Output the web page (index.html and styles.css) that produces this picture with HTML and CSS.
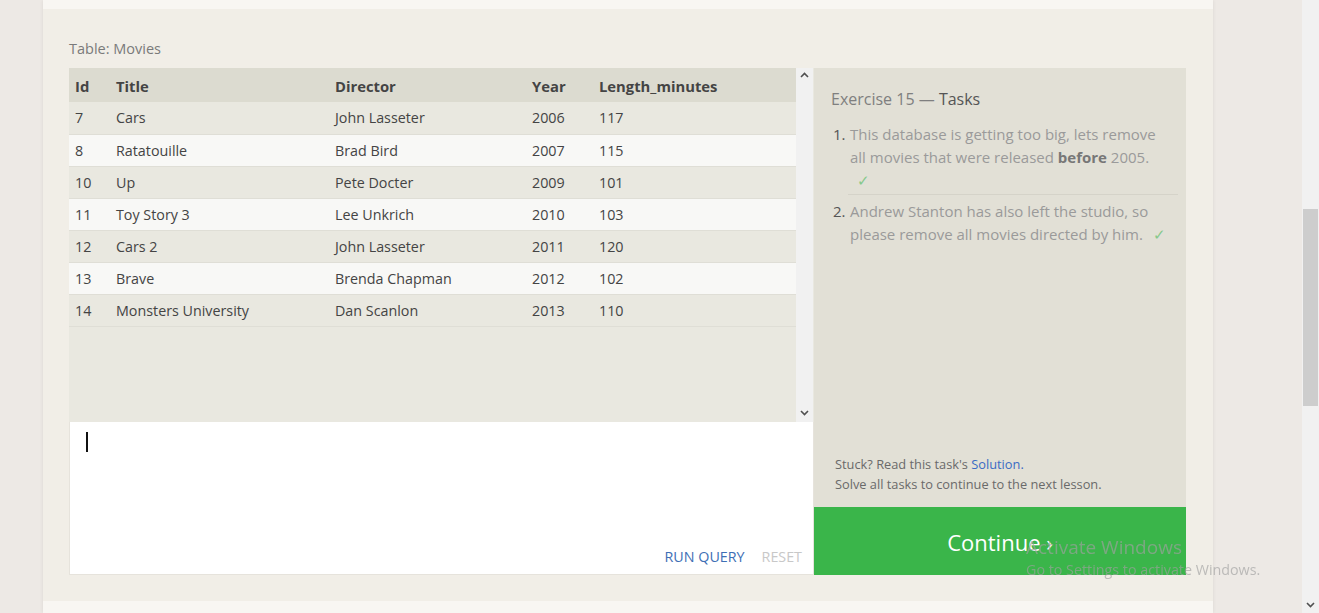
FILE: index.html
```html
<!DOCTYPE html>
<html>
<head>
<meta charset="utf-8">
<link rel="stylesheet" href="styles.css">
</head>
<body>
<div class="viewport">
  <div class="gutter"></div>
  <div class="column">
    <div class="prev-card"></div>
    <div class="card">
      <div class="table-label">Table: Movies</div>
      <div class="exercise">
        <div class="left">
          <div class="table-pane">
            <div class="table-scroll">
              <table class="movies">
                <thead>
                  <tr><th class="c-id">Id</th><th class="c-title">Title</th><th class="c-dir">Director</th><th class="c-year">Year</th><th>Length_minutes</th></tr>
                </thead>
                <tbody>
                  <tr><td>7</td><td>Cars</td><td>John Lasseter</td><td>2006</td><td>117</td></tr>
                  <tr><td>8</td><td>Ratatouille</td><td>Brad Bird</td><td>2007</td><td>115</td></tr>
                  <tr><td>10</td><td>Up</td><td>Pete Docter</td><td>2009</td><td>101</td></tr>
                  <tr><td>11</td><td>Toy Story 3</td><td>Lee Unkrich</td><td>2010</td><td>103</td></tr>
                  <tr><td>12</td><td>Cars 2</td><td>John Lasseter</td><td>2011</td><td>120</td></tr>
                  <tr><td>13</td><td>Brave</td><td>Brenda Chapman</td><td>2012</td><td>102</td></tr>
                  <tr><td>14</td><td>Monsters University</td><td>Dan Scanlon</td><td>2013</td><td>110</td></tr>
                </tbody>
              </table>
            </div>
            <div class="inner-scrollbar">
              <svg class="arrow" width="9" height="6" viewBox="0 0 9 6"><path d="M1 5 L4.5 1.5 L8 5" fill="none" stroke="#505050" stroke-width="1.6"/></svg>
              <svg class="arrow" width="9" height="6" viewBox="0 0 9 6"><path d="M1 1 L4.5 4.5 L8 1" fill="none" stroke="#505050" stroke-width="1.6"/></svg>
            </div>
          </div>
          <div class="editor">
            <div class="caret"></div>
            <div class="editor-actions">
              <span class="run">RUN QUERY</span>
              <span class="reset">RESET</span>
            </div>
          </div>
        </div>
        <div class="right">
          <div class="tasks">
            <div class="tasks-title"><span class="muted">Exercise 15 —</span> Tasks</div>
            <ol class="task-list">
              <li class="task"><span class="num">1.</span><span class="task-text">This database is getting too big, lets remove all movies that were released <b>before</b> 2005.<br><span class="check first">✓</span></span></li>
              <li class="task"><span class="num">2.</span><span class="task-text">Andrew Stanton has also left the studio, so please remove all movies directed by him. <span class="check">✓</span></span></li>
            </ol>
            <div class="stuck">
              <div>Stuck? Read this task's <span class="link">Solution.</span></div>
              <div>Solve all tasks to continue to the next lesson.</div>
            </div>
          </div>
          <div class="continue">Continue ›</div>
        </div>
      </div>
    </div>
    <div class="next-card"></div>
  </div>
  <div class="gutter-right"></div>
  <div class="page-scrollbar">
    <div class="thumb"></div>
    <svg class="page-arrow" width="9" height="6" viewBox="0 0 9 6"><path d="M1 1 L4.5 4.5 L8 1" fill="none" stroke="#505050" stroke-width="1.6"/></svg>
  </div>
</div>
<div class="watermark">
  <div class="wm-title">Activate Windows</div>
  <div class="wm-sub">Go to Settings to activate Windows.</div>
</div>
</body>
</html>
```
FILE: styles.css
```css
html, body {
  margin: 0;
  padding: 0;
  height: 613px;
  overflow: hidden;
}
body {
  background: #ede9e5;
  font-family: "Open Sans", "Noto Sans", sans-serif;
}
.viewport {
  display: flex;
  height: 613px;
}
.gutter {
  width: 43px;
  flex: none;
}
.column {
  width: 1170px;
  flex: none;
  display: flex;
  flex-direction: column;
  box-shadow: 0 0 4px rgba(0, 0, 0, 0.08);
}
.prev-card {
  height: 9px;
  background: #f8f6f2;
  flex: none;
}
.card {
  background: #f1eee7;
  height: 592px;
  flex: none;
  padding: 30px 0 0 26px;
  box-sizing: border-box;
}
.next-card {
  flex: 1;
  background: #f8f6f2;
}
.gutter-right {
  flex: 1;
}
.table-label {
  font-size: 14.5px;
  color: #7a7a7a;
  line-height: 20px;
  height: 20px;
  margin-bottom: 9px;
}
.exercise {
  display: flex;
  height: 507px;
}
.left {
  width: 745px;
  display: flex;
  flex-direction: column;
}
.table-pane {
  height: 354px;
  display: flex;
  background: #e9e8e0;
}
.table-scroll {
  width: 727px;
  overflow: hidden;
}
.movies {
  width: 100%;
  border-collapse: collapse;
  font-size: 14.3px;
  color: #444;
}
.movies th {
  background: #dcdbd0;
  text-align: left;
  font-weight: 700;
  font-size: 14.8px;
  height: 34px;
  box-sizing: border-box;
  padding: 1px 0 0 6px;
  color: #444;
}
.movies td {
  height: 32px;
  padding: 0 0 0 6px;
  box-sizing: border-box;
  border-bottom: 1px solid #dfded6;
}
.movies tbody tr:nth-child(even) td {
  background: #f8f8f6;
}
.movies .c-id { width: 41px; }
.movies .c-title { width: 219px; }
.movies .c-dir { width: 197px; }
.movies .c-year { width: 67px; }
.inner-scrollbar {
  width: 17px;
  background: #f1f1f1;
  display: flex;
  flex-direction: column;
  justify-content: space-between;
  align-items: center;
  padding: 4px 0 6px;
  box-sizing: border-box;
}
.arrow { display: block; }
.editor {
  flex: 1;
  background: #fff;
  border: 1px solid #e6e3dc;
  border-top: none;
  display: flex;
  flex-direction: column;
  justify-content: space-between;
  padding: 10px 11px 8px 16px;
}
.caret {
  width: 2px;
  height: 20px;
  background: #111;
}
.editor-actions {
  display: flex;
  justify-content: flex-end;
  gap: 17px;
  font-size: 14.3px;
  line-height: 18px;
}
.run { color: #3e6fb5; }
.reset { color: #c8c8c8; }
.right {
  width: 372px;
  display: flex;
  flex-direction: column;
}
.tasks {
  flex: 1;
  background: #e2e0d6;
  padding: 20px 8px 13px 17px;
  display: flex;
  flex-direction: column;
}
.tasks-title {
  font-size: 16px;
  color: #555;
  line-height: 22px;
  margin-bottom: 13px;
}
.tasks-title .muted { color: #7f7f7f; }
.task-list {
  list-style: none;
  margin: 0;
  padding: 0;
  flex: 1;
}
.task {
  display: flex;
  font-size: 15px;
  line-height: 23px;
  color: #9a9a9a;
  padding: 0 0 0 2px;
}
.task-text {
  width: 320px;
}
.task:first-child {
  padding-bottom: 2px;
  margin-bottom: 5px;
  border-bottom: 1px solid #d5d3c9;
  margin-left: 17px;
  padding-left: 0;
}
.task:first-child .num { margin-left: -15px; }
.num {
  color: #555;
  width: 17px;
  flex: none;
}
.task-text b { color: #777; }
.check {
  color: #86c98b;
  margin-left: 6px;
}
.check.first { margin-left: 7px; }
.stuck {
  font-size: 12.8px;
  color: #6a6a6a;
  line-height: 20px;
  padding-left: 4px;
}
.link { color: #3a6bc4; }
.continue {
  height: 68px;
  background: #3ab54a;
  color: #fff;
  font-size: 22px;
  padding-top: 2px;
  box-sizing: border-box;
  display: flex;
  align-items: center;
  justify-content: center;
}
.page-scrollbar {
  width: 17px;
  flex: none;
  background: #f1f1f1;
  position: relative;
}
.thumb {
  position: absolute;
  left: 1px;
  right: 1px;
  top: 209px;
  height: 197px;
  background: #cdcdcd;
}
.page-arrow {
  position: absolute;
  left: 4px;
  bottom: 5px;
}
.watermark {
  position: fixed;
  left: 1026px;
  top: 535px;
  color: rgba(160, 160, 160, 0.65);
  font-family: "Open Sans", sans-serif;
}
.wm-title {
  font-size: 19px;
  line-height: 25px;
}
.wm-sub {
  font-size: 14.3px;
  line-height: 20px;
}
```
